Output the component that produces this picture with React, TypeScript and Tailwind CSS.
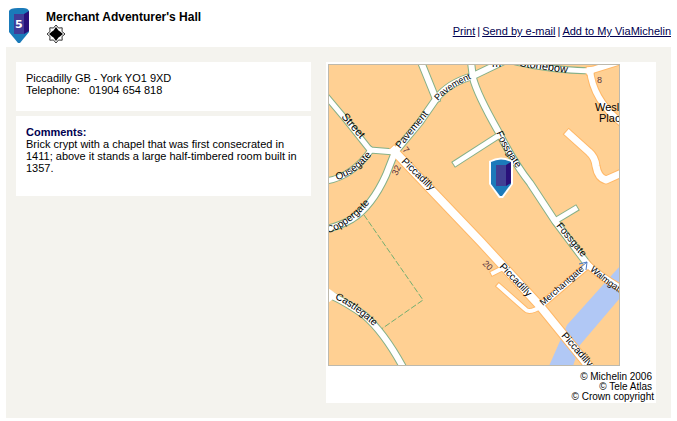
import React from "react";

type Road = { d: string; w: number; edge: string };

const GREEN = "#86b088";
const ORANGE = "#ffb868";

const roads: Road[] = [
  { d: "M326 96 L347 121 L370 150 L395 152", w: 5, edge: GREEN },
  { d: "M326 181 Q352 177 371 150", w: 5, edge: GREEN },
  { d: "M395 152 L386 175 Q372 206 352 219 Q340 226 326 229", w: 6, edge: GREEN },
  { d: "M395 152 L420 122 L436 99 Q448 83 473 76 L502 62", w: 6, edge: GREEN },
  { d: "M436 99 L421 62", w: 6, edge: GREEN },
  { d: "M471 62 L473 78 Q477 94 498 131 Q514 163 530 183 L555 221 L588 265", w: 6, edge: GREEN },
  { d: "M456 163 L498 136", w: 5, edge: GREEN },
  { d: "M555 221 L575 209", w: 5, edge: GREEN },
  { d: "M516 62 Q550 70 591 71", w: 5, edge: GREEN },
  { d: "M326 293 Q346 302 364 315 Q384 332 404 369", w: 6, edge: GREEN },
  { d: "M589 71 L624 60", w: 6, edge: ORANGE },
  { d: "M590 70 Q593 101 624 125", w: 6, edge: ORANGE },
  { d: "M569 134 L589 152 Q595 157 596 166 Q598 178 606 180 L624 172", w: 7, edge: ORANGE },
  { d: "M499 286 L525 309 Q529 314 542 306", w: 4, edge: ORANGE },
  { d: "M493 273 L501 269", w: 4, edge: ORANGE },
  { d: "M588 265 Q601 277 624 290", w: 6, edge: ORANGE },
  { d: "M541 305 L588 265", w: 6, edge: ORANGE },
  { d: "M394 151 L480 241 L540 306 L592 370", w: 8, edge: ORANGE },
];

const streetNames = [
  { id: "street", name: "Street", d: "M341 117 L375 156", size: 11 },
  { id: "ousegate", name: "Ousegate", d: "M337 180 Q361 173 381 142", size: 10 },
  { id: "coppergate", name: "Coppergate", d: "M328 233 Q351 227 378 193", size: 10 },
  { id: "pavement-south", name: "Pavement", d: "M400 149 L440 100", size: 10 },
  { id: "pavement-north", name: "Pavement", d: "M438 101 Q452 85 481 75", size: 9 },
  { id: "stonebow", name: "Stonebow", d: "M519 66 Q550 71 581 75", size: 11 },
  { id: "fossgate-north", name: "Fossgate", d: "M496 133 Q504 152 524 179", size: 10 },
  { id: "fossgate-south", name: "Fossgate", d: "M556 226 L592 269", size: 10 },
  { id: "piccadilly-north", name: "Piccadilly", d: "M401 162 L441 201", size: 10 },
  { id: "piccadilly-mid", name: "Piccadilly", d: "M499 267 L538 308", size: 10 },
  { id: "piccadilly-south", name: "Piccadilly", d: "M561 336 L599 379", size: 10 },
  { id: "merchantgate", name: "Merchantgate", d: "M543 306 L597 259", size: 9 },
  { id: "walmgate", name: "Walmgate", d: "M590 270 Q602 282 630 300", size: 9 },
  { id: "castlegate", name: "Castlegate", d: "M335 299 Q356 308 384 336", size: 10 },
];

function MapView() {
  return (
    <svg viewBox="328 64 292 302" className="block w-full" role="img" aria-label="Street map around Merchant Adventurer's Hall">
      <rect x="328" y="64" width="292" height="302" fill="#ffd093" />
      <path d="M620 266 L602 286 L567 325 L549 366 L573 366 L580 345 L620 298 Z" fill="#b1c8f5" />
      <path d="M364 215 L423 300 L380 330" fill="none" stroke="#73ae70" strokeDasharray="6 2" />
      <g fill="none" strokeLinejoin="round">
        {roads.map((r) => (
          <path key={r.d} d={r.d} stroke={r.edge} strokeWidth={r.w + 2} strokeLinecap="square" />
        ))}
        {roads.map((r) => (
          <path key={r.d} d={r.d} stroke="#fff" strokeWidth={r.w} strokeLinecap="square" />
        ))}
      </g>
      <path d="M328 288 L338 295 L328 303 Z" fill="#fff" />
      <path d="M580 268 L587 262 L586 270 M587 262 L579 264" fill="none" stroke="#4c79c2" />
      <g fill="#000" className="font-['Liberation_Sans',Arial,sans-serif]">
        {streetNames.map((s) => (
          <React.Fragment key={s.id}>
            <path id={s.id} d={s.d} fill="none" />
            <text fontSize={s.size}>
              <textPath href={"#" + s.id}>{s.name}</textPath>
            </text>
          </React.Fragment>
        ))}
        <text x="492" y="67" fontSize="11">m</text>
        <text x="595" y="111" fontSize="11">Wesley</text>
        <text x="599" y="122" fontSize="11">Place</text>
        <g fill="#5d343e" fontSize="9">
          <text x="597" y="83">8</text>
          <text transform="translate(402 150) rotate(50)">7</text>
          <text transform="translate(397 176) rotate(-65)">32</text>
          <text transform="translate(482 264) rotate(45)">20</text>
        </g>
      </g>
      <path d="M489 161 Q501 154 513 161 V184 L503 198 H499 L489 184 Z" fill="#fff" />
      <path d="M491 162 Q501 157 511 162 V184 L502 196 H500 L491 184 Z" fill="#1c7aba" />
      <path d="M496 165 H506 V186 H496 Z" fill="#414094" />
      <path d="M506 165 L511 162 V183 L506 186 Z" fill="#29107a" />
      <rect x="328" y="64" width="292" height="302" fill="none" stroke="#bdb9ad" strokeWidth="2" />
    </svg>
  );
}

function NumberMarker() {
  return (
    <svg viewBox="0 0 20 36" className="h-9 w-5 shrink-0" role="img" aria-label="Place 5">
      <path d="M0 3 Q1 0 9 0 H14 Q19 0 20 3 V24 L11 35 H9 L0 24 Z" fill="#1a7ab9" />
      <path d="M5 6 H15 V26 H5 Z" fill="#413c98" />
      <path d="M15 6 L20 3 V23 L15 26 Z" fill="#29107a" />
      <text x="6" y="20" fontSize="11" fontWeight="700" fill="#fff" className="font-['DejaVu_Sans',sans-serif]">5</text>
    </svg>
  );
}

function StarRating() {
  return (
    <svg viewBox="0 0 20 20" className="size-5" role="img" aria-label="Place of interest">
      <path
        d="M10 1 L12.5 4 L16.2 3.8 L16 7.5 L19 10 L16 12.5 L16.2 16.2 L12.5 16 L10 19 L7.5 16 L3.8 16.2 L4 12.5 L1 10 L4 7.5 L3.8 3.8 L7.5 4 Z"
        fill="#fff"
        stroke="#333"
      />
      <path d="M10 3 L12.5 6.5 L14 7.5 L17 10 L14 12.5 L12.5 13.5 L10 17 L7.5 13.5 L6 12.5 L3 10 L6 7.5 L7.5 6.5 Z" fill="#000" />
    </svg>
  );
}

export default function App() {
  return (
    <div className="bg-white px-1.5 pb-1 font-['Liberation_Sans',Arial,sans-serif] text-[11px] leading-3 text-black">
      <header className="flex h-[47px] items-start justify-between">
        <div className="flex gap-[17px] pt-2 pl-[3px]">
          <NumberMarker />
          <div>
            <h1 className="pt-0.5 text-xs leading-[14px] font-bold">Merchant Adventurer's Hall</h1>
            <StarRating />
          </div>
        </div>
        <nav className="flex gap-0.5 pt-[25px] text-[#000050]">
          <a href="#print" className="underline">Print</a>
          <span>|</span>
          <a href="#email" className="underline">Send by e-mail</a>
          <span>|</span>
          <a href="#add" className="underline">Add to My ViaMichelin</a>
        </nav>
      </header>
      <main className="flex items-start gap-[15px] bg-[#f4f3ee] py-[15px] pr-[15px] pl-2.5">
        <div className="flex min-w-0 flex-1 flex-col gap-[5px]">
          <section className="bg-white px-2.5 pt-2.5 pb-[15px]">
            <p>Piccadilly GB - York YO1 9XD</p>
            <p>
              Telephone: <span className="ml-1.5">01904 654 818</span>
            </p>
          </section>
          <section className="bg-white px-2.5 pt-2.5 pb-[22px]">
            <h2 className="font-bold text-[#000050]">Comments:</h2>
            <p>
              Brick crypt with a chapel that was first consecrated in 1411; above it stands a large half-timbered room
              built in 1357.
            </p>
          </section>
        </div>
        <aside className="w-[330px] shrink-0 bg-white pt-0.5 pl-0.5">
          <div className="mr-9">
            <MapView />
          </div>
          <div className="pt-1.5 pr-0.5 pb-px text-right text-[10px] leading-[10px]">
            <p className="pr-0.5">© Michelin 2006</p>
            <p className="pr-0.5">© Tele Atlas</p>
            <p>© Crown copyright</p>
          </div>
        </aside>
      </main>
    </div>
  );
}
